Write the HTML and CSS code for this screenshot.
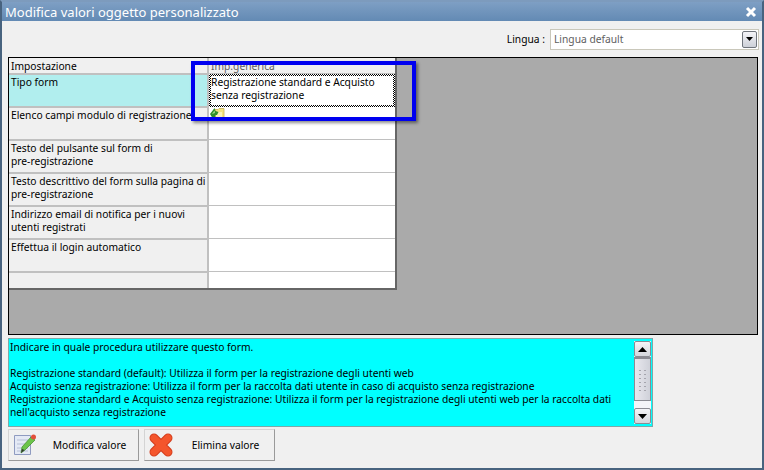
FILE: index.html
```html
<!DOCTYPE html>
<html lang="it">
<head>
<meta charset="utf-8">
<title>Modifica valori oggetto personalizzato</title>
<link rel="stylesheet" href="styles.css">
</head>
<body>
<div class="window">
  <header class="titlebar">
    <span class="title">Modifica valori oggetto personalizzato</span>
    <svg class="close" width="12" height="12" viewBox="0 0 12 12"><path d="M2 2l8 8M10 2l-8 8" stroke="#fff" stroke-width="3"/></svg>
  </header>
  <div class="content">
    <div class="langrow">
      <span class="langlabel">Lingua :</span>
      <div class="combo">
        <span class="combotext">Lingua default</span>
        <span class="combobtn"><svg width="7" height="4" viewBox="0 0 7 4"><path d="M0 0h7L3.500 4z" fill="#000"/></svg></span>
      </div>
    </div>
    <div class="gridpanel">
      <div class="grid">
        <div class="cell key head">Impostazione</div><div class="cell val head gray">Imp.generica</div>
        <div class="cell key sel r2">Tipo form</div><div class="cell val r2 focus">Registrazione standard e Acquisto<br>senza registrazione</div>
        <div class="cell key r2">Elenco campi modulo di registrazione</div>
        <div class="cell val r2 iconcell"><svg class="folder" width="15" height="14" viewBox="0 0 15 14"><path d="M5 2.500h3l1-1h5v11.500H5z" fill="#f3e27e" stroke="#c9b25c" stroke-width=".8"/><path d="M6 5h6v7H6z" fill="#fbf3b8"/><path d="M0 7l4.500-6 1 3 3 1-1.500 3-1.500 0-.5 4.500L3 12z" fill="#2f8f2b"/><path d="M2 7l2.500-3.500.5 2.500z" fill="#a5e08c"/></svg></div>
        <div class="cell key r2">Testo del pulsante sul form di<br>pre-registrazione</div><div class="cell val r2"></div>
        <div class="cell key r2">Testo descrittivo del form sulla pagina di<br>pre-registrazione</div><div class="cell val r2"></div>
        <div class="cell key r2">Indirizzo email di notifica per i nuovi<br>utenti registrati</div><div class="cell val r2"></div>
        <div class="cell key r2">Effettua il login automatico</div><div class="cell val r2"></div>
        <div class="cell key last"></div><div class="cell val last"></div>
      </div>
      <div class="highlight"></div>
    </div>
    <div class="help">
      <div class="helptext">Indicare in quale procedura utilizzare questo form.<br><br>Registrazione standard (default): Utilizza il form per la registrazione degli utenti web<br>Acquisto senza registrazione: Utilizza il form per la raccolta dati utente in caso di acquisto senza registrazione<br>Registrazione standard e Acquisto senza registrazione: Utilizza il form per la registrazione degli utenti web per la raccolta dati<br>nell'acquisto senza registrazione</div>
      <div class="scrollbar">
        <span class="sbtn"><svg width="9" height="5" viewBox="0 0 9 5"><path d="M4.500 0L9 5H0z"/></svg></span>
        <span class="thumb"><svg width="9" height="22" viewBox="0 0 9 22"><path d="M1 1h2v1H1zM6 1h2v1H6zM1 5h2v1H1zM6 5h2v1H6zM1 9h2v1H1zM6 9h2v1H6zM1 13h2v1H1zM6 13h2v1H6zM1 17h2v1H1zM6 17h2v1H6zM1 21h2v1H1zM6 21h2v1H6z" fill="#a5a5ad"/></svg></span>
        <span class="track"></span>
        <span class="sbtn"><svg width="9" height="5" viewBox="0 0 9 5"><path d="M0 0h9L4.500 5z"/></svg></span>
      </div>
    </div>
    <div class="actions">
      <button class="btn" type="button">
        <svg class="btnicon" width="24" height="24" viewBox="0 0 24 24"><path d="M1.500 2.500h16v19h-16z" fill="#e4e9f5" stroke="#8f9bc0"/><path d="M4 7h11M4 11h11M4 15h11M4 18h11" stroke="#b6bfd6"/><path d="M8 20l1-6L18 4l4 3-10 10z" fill="#6cc44a" stroke="#3c8a2a" stroke-width=".7"/><path d="M8 20l1-4 2.500 1z" fill="#333"/><circle cx="20.500" cy="4" r="2.500" fill="#e2503c"/></svg>
        <span class="btnlabel">Modifica valore</span>
      </button>
      <button class="btn" type="button">
        <svg class="btnicon" width="24" height="24" viewBox="0 0 24 24"><path d="M5 5l14 14M19 5L5 19" stroke="#d23c1c" stroke-width="9" stroke-linecap="round"/><path d="M5 5l14 14M19 5L5 19" stroke="#f4552c" stroke-width="7" stroke-linecap="round"/></svg>
        <span class="btnlabel">Elimina valore</span>
      </button>
    </div>
  </div>
</div>
</body>
</html>
```
FILE: styles.css
```css
html, body { margin: 0; padding: 0; }
body { width: 764px; height: 470px; overflow: hidden; font-family: "Noto Sans", sans-serif; font-size: 10.250px; color: #000; }
.window { box-sizing: border-box; width: 764px; height: 470px; background: #f0f0f0; border: 2px solid #48637f; border-top-color: #7d9bbd; display: flex; flex-direction: column; position: relative; }
.titlebar { height: 19px; padding: 0 3px 0 3px; display: flex; align-items: center; justify-content: space-between; background: linear-gradient(#7e9fc4, #638ab4); flex: none; }
.title { color: #fff; font-size: 13px; white-space: nowrap; }
.close { margin-right: 2px; }
.content { flex: 1; padding: 0 4px 0 6px; display: flex; flex-direction: column; position: relative; }
.langrow { display: flex; justify-content: flex-end; align-items: center; height: 36px; flex: none; }
.langlabel { margin-right: 5px; white-space: nowrap; }
.combo { box-sizing: border-box; width: 209px; height: 21px; margin-right: -1px; border: 1px solid #c9c7ba; background: #fff; display: flex; align-items: center; justify-content: space-between; padding: 0 1px 0 3px; color: #606060; }
.combobtn { box-sizing: border-box; width: 15px; height: 17px; display: flex; align-items: center; justify-content: center; border: 1px solid #70757d; border-radius: 2px; background: linear-gradient(#f4f4f8, #cdd0d8); }
.gridpanel { box-sizing: border-box; flex: none; height: 278px; width: 750px; background: #aaa; border: 1px solid #000; position: relative; }
.grid { box-sizing: content-box; width: 386px; display: grid; grid-template-columns: 200px 186px; grid-template-rows: 16px repeat(6, 33px) 16px; border-right: 2px solid #666; border-bottom: 2px solid #666; background: #fff; }
.cell { box-sizing: border-box; padding: 1px 2px 0 2px; line-height: 13px; border-bottom: 1px solid #c0c0c0; overflow: hidden; white-space: nowrap; }
.key { background: #f0f0f0; border-right: 2px solid #c0c0c0; border-top: 1px solid #c0c0c0; }
.val { background: #fff; }
.head { border-top: 0; padding-top: 2px; }
.head.gray { background: #f0f0f0; color: #606060; }
.sel { background: #b1eeee; }
.focus { border: 2px solid transparent; padding: 0; background: linear-gradient(#fff, #fff) padding-box, repeating-conic-gradient(#000 0 25%, #fff 0 50%) 0 0 / 2px 2px border-box; }
.last { border-bottom: 0; }
.iconcell { padding: 0 0 0 1px; }
.folder { display: block; }
.highlight { position: absolute; left: 182px; top: 3px; width: 217px; height: 52px; border: 4px solid #0000f0; box-shadow: 2px 2px 3px rgba(0,0,0,.45); }
.help { box-sizing: border-box; flex: none; margin-top: 3px; width: 645px; height: 89px; background: #0ff; border: 1px solid #7fa8a8; display: flex; }
.helptext { flex: 1; padding: 2px 2px 0 1px; line-height: 13px; overflow: hidden; white-space: nowrap; }
.scrollbar { width: 17px; flex: none; margin: 2px 1px 2px 0; background: #f4f4f8; display: flex; flex-direction: column; }
.sbtn { box-sizing: border-box; height: 16px; flex: none; display: flex; align-items: center; justify-content: center; border: 1px solid #8b8b93; border-radius: 2px; background: linear-gradient(#f4f4f8, #d4d6dc); }
.thumb { box-sizing: border-box; height: 44px; flex: none; display: flex; align-items: center; justify-content: center; border: 1px solid #8b8b93; border-top-width: 2px; background: linear-gradient(90deg, #e8e8ee, #cfd1d9); }
.track { flex: 1; }
.actions { display: flex; gap: 5px; margin-top: 2px; flex: none; }
.btn { box-sizing: border-box; width: 131px; height: 32px; padding: 0 0 0 4px; background: #f0f0f0; border: 1px solid; border-color: #d4d4d4 #9a9a9a #9a9a9a #d4d4d4; display: flex; align-items: center; font: inherit; color: #000; }
.btnicon { flex: none; }
.btnlabel { flex: 1; text-align: center; padding-left: 4px; white-space: nowrap; }
```
